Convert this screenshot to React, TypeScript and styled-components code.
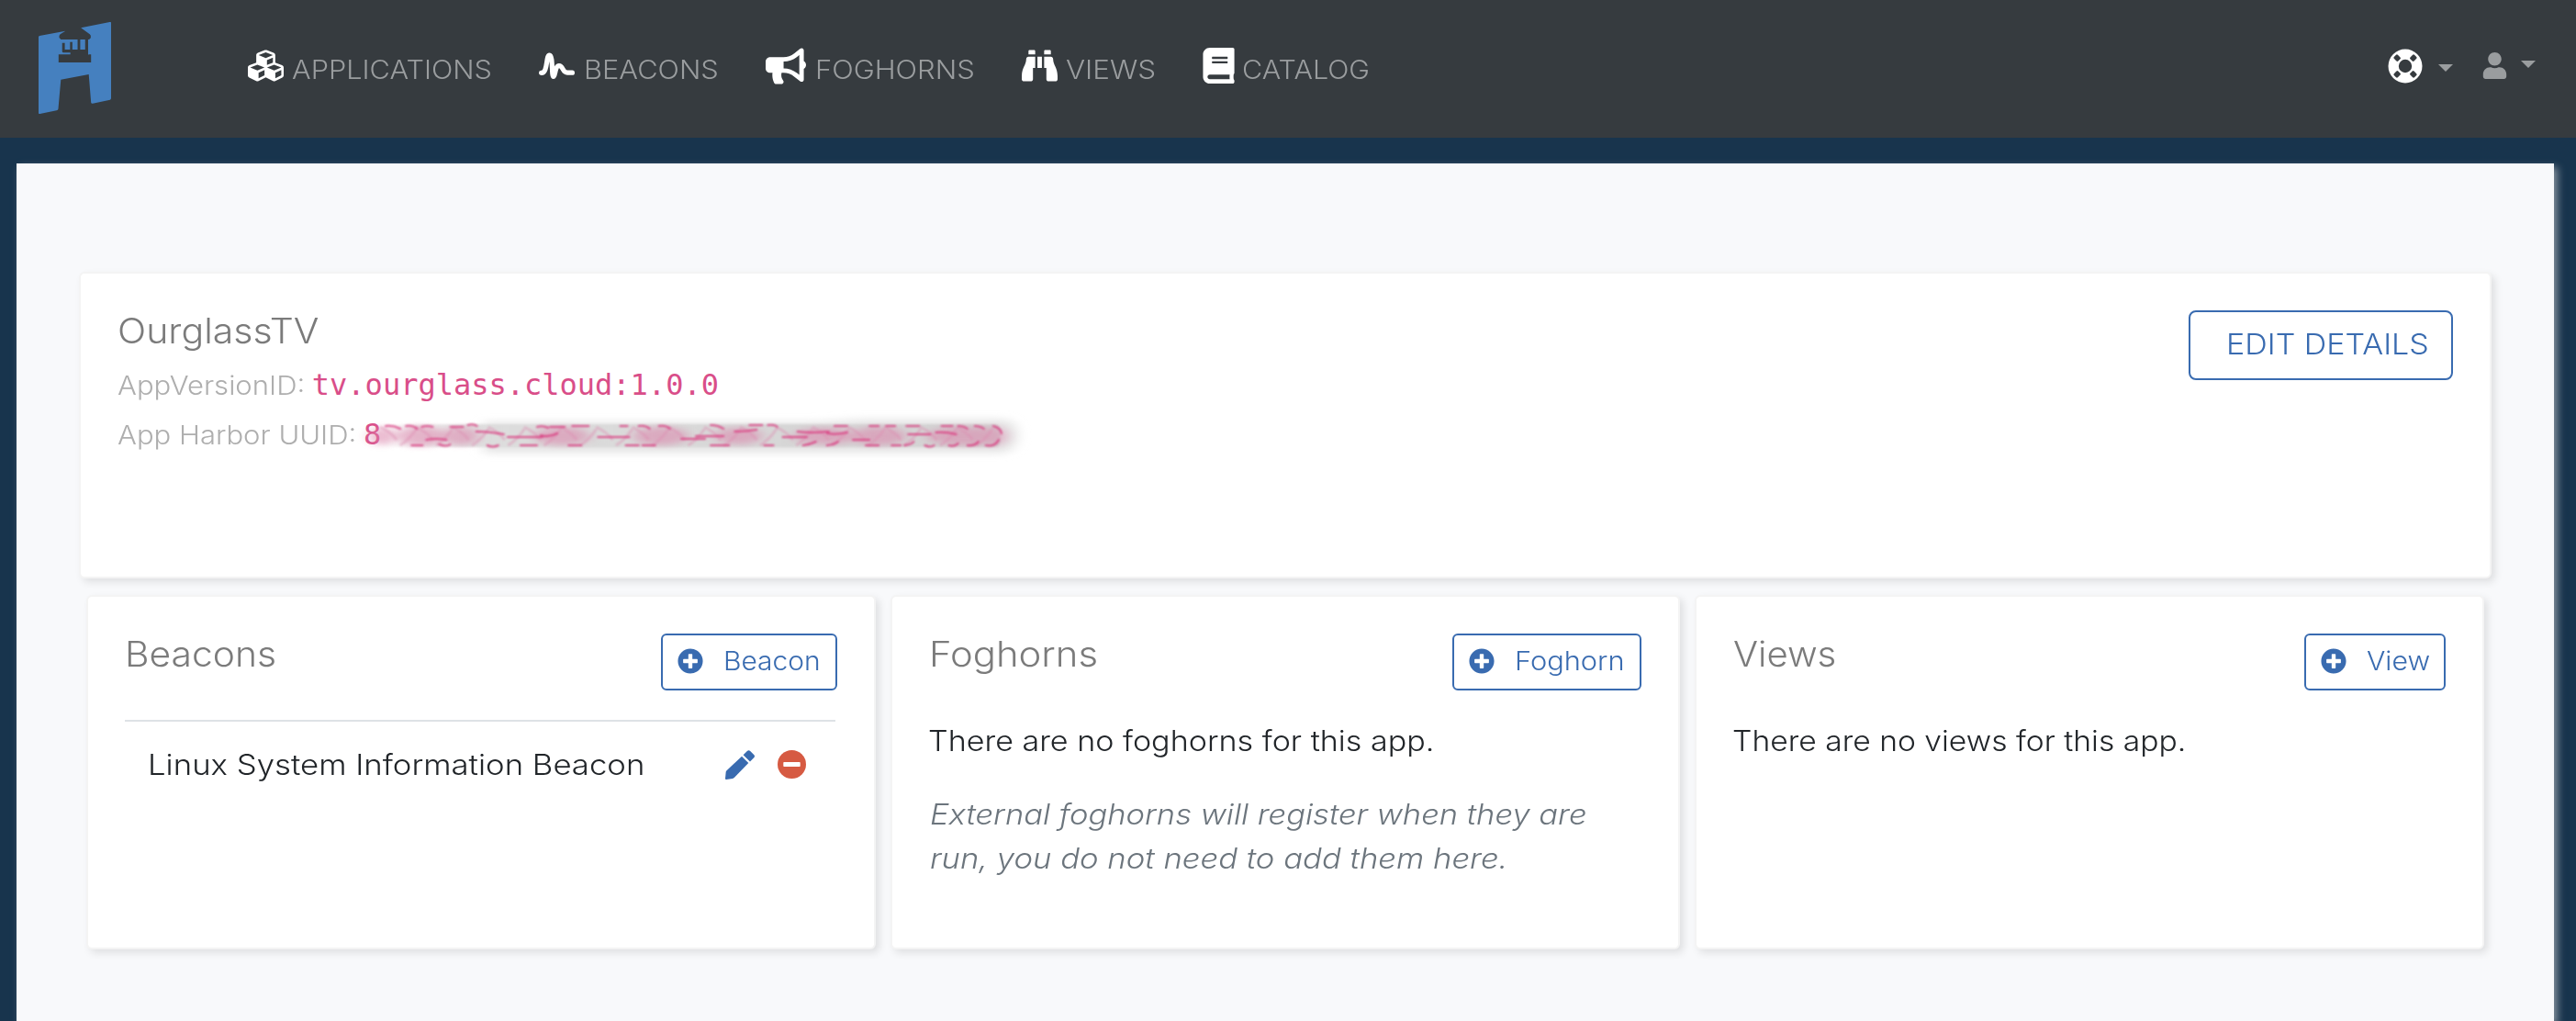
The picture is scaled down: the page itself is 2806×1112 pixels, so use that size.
import React from "react";
import styled, { createGlobalStyle } from "styled-components";
import { FaCubes, FaBullhorn, FaBinoculars, FaBook, FaUser, FaPlusCircle } from "react-icons/fa";

const GlobalStyle = createGlobalStyle`
  * { box-sizing: border-box; }
  body {
    margin: 0;
    height: 1112px;
    overflow: hidden;
    background: #18344d;
    color: #212529;
    font-family: Inter, "Open Sans", "Liberation Sans", sans-serif;
    font-weight: 300;
  }
`;

const Page = styled.div`
  height: 1112px;
  overflow: hidden;
  display: flex;
  flex-direction: column;
`;

const Wide = styled.span<{ $by: number }>`
  display: inline-block;
  transform: scaleX(${(p) => p.$by});
  transform-origin: left center;
  white-space: nowrap;
`;

const Navbar = styled.header`
  height: 150px;
  flex: none;
  display: flex;
  background: #363b3f;
  padding: 0 44px 0 42px;
`;

const LogoLink = styled.a`
  display: block;
  margin-top: 24px;
  width: 79px;
  height: 100px;
  svg { display: block; }
`;

const NavList = styled.nav`
  height: 143px;
  margin-left: 149px;
  display: grid;
  grid-template-columns: 317px 247px 279px 197px auto;
  align-items: center;
`;

const NavItem = styled.a<{ $iconBox: number }>`
  display: grid;
  grid-template-columns: ${(p) => p.$iconBox}px auto;
  align-items: center;
  justify-content: start;
  color: #9a9d9f;
  font-size: 28px;
  line-height: 34px;
  svg { display: block; color: #fff; }
  span { margin-top: 9px; }
`;

const BookIcon = styled(FaBook)`
  margin-left: -2px;
`;

const NavTools = styled.div`
  height: 143px;
  margin-left: auto;
  display: flex;
  align-items: center;
  color: #9a9d9f;
  svg { display: block; }
`;

const Caret = styled.i<{ $half: number; $left: number; $shift: number }>`
  width: 0;
  height: 0;
  margin: ${(p) => p.$shift}px 0 0 ${(p) => p.$left}px;
  border-left: ${(p) => p.$half}px solid transparent;
  border-right: ${(p) => p.$half}px solid transparent;
  border-top: ${(p) => p.$half}px solid #9a9d9f;
`;

const UserSlot = styled.span`
  margin-left: 31px;
`;

const Panel = styled.main`
  flex: 1;
  margin: 28px 24px 0 18px;
  padding: 118px 68px 0;
  background: #f8f9fb;
  box-shadow: 4px 4px 8px rgba(178, 184, 190, 0.7);
`;

const Card = styled.section`
  background: #fff;
  background-clip: padding-box;
  border: 2px solid #f4f4f4;
  border-radius: 6px;
  padding: 40px;
  box-shadow: 4px 4px 9px rgba(0, 0, 0, 0.1);
`;

const DetailCard = styled(Card)`
  height: 334px;
  display: flex;
  justify-content: space-between;
  align-items: flex-start;
`;

const CardRow = styled.div`
  display: grid;
  grid-template-columns: repeat(3, 860px);
  gap: 16px;
  margin: 18px 0 0 8px;
`;

const ListCard = styled(Card)`
  height: 386px;
`;

const Title = styled.h2`
  margin: 0;
  font-size: 37.5px;
  font-weight: 300;
  line-height: 45px;
  color: #7b7b7b;
`;

const CardHead = styled.div`
  height: 62px;
  margin-bottom: 31px;
  display: flex;
  justify-content: space-between;
  align-items: flex-start;
`;

const Meta = styled.div`
  margin-top: 9px;
`;

const MetaLine = styled.div<{ $gap: number }>`
  height: 54px;
  display: flex;
  align-items: baseline;
  gap: ${(p) => p.$gap}px;
  line-height: 54px;
  white-space: nowrap;
`;

const MetaLabel = styled(Wide)`
  font-size: 28px;
  color: #aeaeae;
`;

const Code = styled.code`
  font-family: "DejaVu Sans Mono", "Liberation Mono", monospace;
  font-size: 32px;
  font-weight: 400;
  color: #d94e89;
`;

const Redacted = styled(Code)`
  position: relative;
  display: inline-block;
`;

const SmearLayer = styled.svg`
  position: absolute;
  left: 10px;
  top: 2px;
  overflow: visible;
`;

const EditButton = styled.button`
  width: 288px;
  height: 76px;
  padding: 0 0 3px 39px;
  border: 2px solid #396bb0;
  border-radius: 8px;
  background: transparent;
  color: #396bb0;
  font-family: inherit;
  font-weight: 300;
  font-size: 31.5px;
  text-align: left;
`;

const AddButton = styled.button<{ $width: number }>`
  width: ${(p) => p.$width}px;
  height: 62px;
  display: flex;
  align-items: center;
  gap: 21.5px;
  padding: 0 0 3px 16px;
  border: 2px solid #396bb0;
  border-radius: 6px;
  background: transparent;
  color: #396bb0;
  font-family: inherit;
  font-weight: 300;
  font-size: 28px;
  line-height: 34px;
`;

const BeaconTable = styled.div`
  margin: 32px 2px 0 0;
  border-top: 2px solid #dee2e6;
`;

const BeaconRow = styled.div`
  display: flex;
  align-items: center;
  padding: 23px 32px 0 25px;
  font-size: 31px;
  line-height: 48px;
  svg { display: block; }
`;

const RowActions = styled.div`
  margin-left: auto;
  display: flex;
  gap: 25px;
`;

const Message = styled.p`
  margin: 0 0 0 -1px;
  font-size: 31px;
  line-height: 48px;
`;

const Hint = styled.p`
  margin: 32px 0 0 1px;
  font-size: 31px;
  font-style: italic;
  line-height: 48px;
  color: #6c757d;
`;

const Logo = () => (
  <svg width="79" height="100" viewBox="118 72 221 300" preserveAspectRatio="none">
    <path
      fill="#4580bf"
      d="M118 121Q118 118 121 117L200 101L184 112L181 117V123L186 129H272L277 124V116L274 112L247 91L335 72Q339 71 339 75V321Q339 325 336 326L283 338Q279 339 278 335L271 243L186 260L178 356Q177 360 173 361L122 372Q118 373 118 368Z"
    />
    <path
      fill="#363b3f"
      d="M179 178H215V172H194Q190 172 190 168V140H198V162H214V137H221V162H237V129H245V162H260V129H270V178H278V204H179Z"
    />
    <path fill="#4580bf" d="M269 129H272V178H269Z" />
  </svg>
);

const Pulse = () => (
  <svg width="39" height="30" viewBox="0 0 39 30" fill="none" stroke="#fff" strokeWidth="5.2" strokeLinecap="round" strokeLinejoin="round">
    <path d="M2.6 22.4C10 23 7.400 3 11.600 3C15.600 3 13.600 26.500 15.800 26.500C18 26.500 17.400 14.600 22 14.600C26.600 14.600 25.500 22.200 31 22.200H36.400" />
  </svg>
);

const LifeRing = () => (
  <svg width="38" height="38" viewBox="-19 -19 38 38">
    <circle r="18.500" fill="#fff" />
    <circle r="7.200" fill="#363b3f" />
    {[45, 135, 225, 315].map((a) => (
      <rect key={a} x="9.300" y="-2.900" width="6.400" height="5.800" rx="1.300" fill="#363b3f" transform={`rotate(${a})`} />
    ))}
  </svg>
);

const Pencil = () => (
  <svg width="32" height="32" viewBox="0 0 32 32" fill="#396bb0">
    <path d="M18 6.800L25.300 14L10 29.700Q9 30.700 8 30.900L1 32Q0 32 0 31L.7 23.800Q.8 23 1.500 22.300Z" />
    <path d="M19.600 5.300L23.900 1Q25.500-.6 27.200 1L31.200 5Q32.800 6.600 31.200 8.300L27 12.600Z" />
  </svg>
);

const Minus = () => (
  <svg width="31" height="31" viewBox="0 0 31 31">
    <circle cx="15.500" cy="15.500" r="15.500" fill="#d65a42" />
    <rect x="6.300" y="12.900" width="18.400" height="5.200" rx=".8" fill="#fff" />
  </svg>
);

/* Short curved leftovers of each character, placed on the top, middle or bottom of the band. */
const strokes = [
  "M14 2q8-1 16 3", "M36 2q8-1 12 3", "M53 3q6-2 12 0", "M84 3h14", "M103 1q6-2 10 1",
  "M112 8q14 0 30 3", "M146 14h38", "M178 3q6-2 12 1", "M192 3h16", "M182 12q8 3 18-2", "M216 2h18",
  "M42 23h12", "M72 22q8 3 12 0", "M124 23q6 3 12 0", "M58 17q10-2 22 0", "M160 23h18", "M212 23h14",
  "M244 14h34", "M268 2l8 0", "M288 2q8-1 12 3", "M310 2q8-1 12 3", "M274 23h14", "M292 23h14", "M334 16h26",
  "M350 13h30", "M366 1q8 0 14 4", "M366 23h20", "M392 8q12 0 24-2", "M408 1h14", "M428 1q8-1 10 2", "M424 23h10",
  "M444 14h26", "M460 8q14 2 34 0", "M466 23q8-1 14-4", "M500 2h14", "M520 17h18", "M492 23q8-1 12-4",
  "M538 2h10", "M556 2h10", "M578 2h14", "M534 23h14", "M562 23h10", "M576 23q8-1 10-4", "M598 23q6 3 10 0",
  "M580 11h24", "M616 2h12", "M634 2q6 0 10 3", "M652 2q6 0 10 3", "M672 2q8 2 9 8", "M624 23q6 2 10-2",
  "M644 23q8 1 12-4", "M664 23q10 2 14-6", "M610 9q10-1 22 2", "M492 10q10 2 22-1"
];

const blobs: [number, number, number][] = [
  [10, 14, 20], [52, 26, 22], [95, 20, 20], [205, 30, 20], [312, 30, 20], [396, 26, 18],
  [490, 34, 18], [548, 30, 20], [640, 40, 20], [672, 14, 20]
];

const Smear = () => (
  <SmearLayer width="704" height="52" viewBox="0 -14 700 52" preserveAspectRatio="none" aria-hidden="true">
    <defs>
      <filter id="halo" x="-5%" y="-60%" width="110%" height="220%"><feGaussianBlur stdDeviation="7 4" /></filter>
      <filter id="soft" x="-30%" y="-30%" width="160%" height="160%"><feGaussianBlur stdDeviation="7 3" /></filter>
      <filter id="edge" x="-5%" y="-60%" width="110%" height="220%"><feGaussianBlur stdDeviation=".9" /></filter>
      <linearGradient id="band" x1="0" x2="1">
        <stop offset="0" stopColor="#d8d8d8" stopOpacity="0" />
        <stop offset=".14" stopColor="#dcdcdc" stopOpacity=".9" />
        <stop offset="1" stopColor="#d2d2d2" />
      </linearGradient>
    </defs>
    <path d="M120-2H480L530-5H680Q698-5 698 12T680 31H120Z" fill="#e4e4e4" filter="url(#halo)" />
    <rect x="8" y="0" width="672" height="25" rx="6" fill="url(#band)" filter="url(#edge)" />
    <g fill="#dc84ab" opacity=".55" filter="url(#soft)">
      {blobs.map(([x, rx, h]) => <ellipse key={x} cx={x} cy="13" rx={rx} ry={h / 2} />)}
    </g>
    <g stroke="#dd8fb2" strokeWidth="3" opacity=".45" fill="none" filter="url(#edge)">
      {Array.from({ length: 34 }, (_, i) => (
        <path key={i} d={i % 2 ? `M${10 + i * 19.500} 23q10-6 18-18` : `M${8 + i * 19.500} 3q12 6 18 14`} />
      ))}
    </g>
    <g stroke="#da3f82" strokeWidth="2.100" opacity=".9" strokeLinecap="round" fill="none" filter="url(#edge)">
      {strokes.map((d) => <path key={d} d={d} />)}
    </g>
  </SmearLayer>
);

const navEntries = [
  { label: "APPLICATIONS", box: 48, by: 1.096, icon: <FaCubes size={39} /> },
  { label: "BEACONS", box: 49, by: 1.1, icon: <Pulse /> },
  { label: "FOGHORNS", box: 54, by: 1.105, icon: <FaBullhorn size={44} /> },
  { label: "VIEWS", box: 48, by: 1.12, icon: <FaBinoculars size={39} /> },
  { label: "CATALOG", box: 43, by: 1.088, icon: <BookIcon size={39} /> },
];

export default function App() {
  return (
    <Page>
      <GlobalStyle />
      <Navbar>
        <LogoLink><Logo /></LogoLink>
        <NavList>
          {navEntries.map((n) => (
            <NavItem key={n.label} $iconBox={n.box}>
              {n.icon}
              <Wide $by={n.by}>{n.label}</Wide>
            </NavItem>
          ))}
        </NavList>
        <NavTools>
          <LifeRing />
          <Caret $half={8} $left={17} $shift={5} />
          <UserSlot><FaUser size={29} /></UserSlot>
          <Caret $half={8.5} $left={14} $shift={-3} />
        </NavTools>
      </Navbar>

      <Panel>
        <DetailCard>
          <div>
            <Title><Wide $by={1.095}>OurglassTV</Wide></Title>
            <Meta>
              <MetaLine $gap={27.5}>
                <MetaLabel $by={1.108}>AppVersionID:</MetaLabel>
                <Code>tv.ourglass.cloud:1.0.0</Code>
              </MetaLine>
              <MetaLine $gap={33}>
                <MetaLabel $by={1.108}>App Harbor UUID:</MetaLabel>
                <Redacted>8<Smear /></Redacted>
              </MetaLine>
            </Meta>
          </div>
          <EditButton><Wide $by={1.08}>EDIT DETAILS</Wide></EditButton>
        </DetailCard>

        <CardRow>
          <ListCard>
            <CardHead>
              <Title><Wide $by={1.088}>Beacons</Wide></Title>
              <AddButton $width={192}><FaPlusCircle size={28} /><Wide $by={1.07}>Beacon</Wide></AddButton>
            </CardHead>
            <BeaconTable>
              <BeaconRow>
                <Wide $by={1.12}>Linux System Information Beacon</Wide>
                <RowActions><Pencil /><Minus /></RowActions>
              </BeaconRow>
            </BeaconTable>
          </ListCard>

          <ListCard>
            <CardHead>
              <Title><Wide $by={1.115}>Foghorns</Wide></Title>
              <AddButton $width={206}><FaPlusCircle size={28} /><Wide $by={1.1}>Foghorn</Wide></AddButton>
            </CardHead>
            <Message><Wide $by={1.099}>There are no foghorns for this app.</Wide></Message>
            <Hint>
              <Wide $by={1.114}>External foghorns will register when they are</Wide>
              <Wide $by={1.118}>run, you do not need to add them here.</Wide>
            </Hint>
          </ListCard>

          <ListCard>
            <CardHead>
              <Title><Wide $by={1.07}>Views</Wide></Title>
              <AddButton $width={154}><FaPlusCircle size={28} /><Wide $by={1.08}>View</Wide></AddButton>
            </CardHead>
            <Message><Wide $by={1.085}>There are no views for this app.</Wide></Message>
          </ListCard>
        </CardRow>
      </Panel>
    </Page>
  );
}
